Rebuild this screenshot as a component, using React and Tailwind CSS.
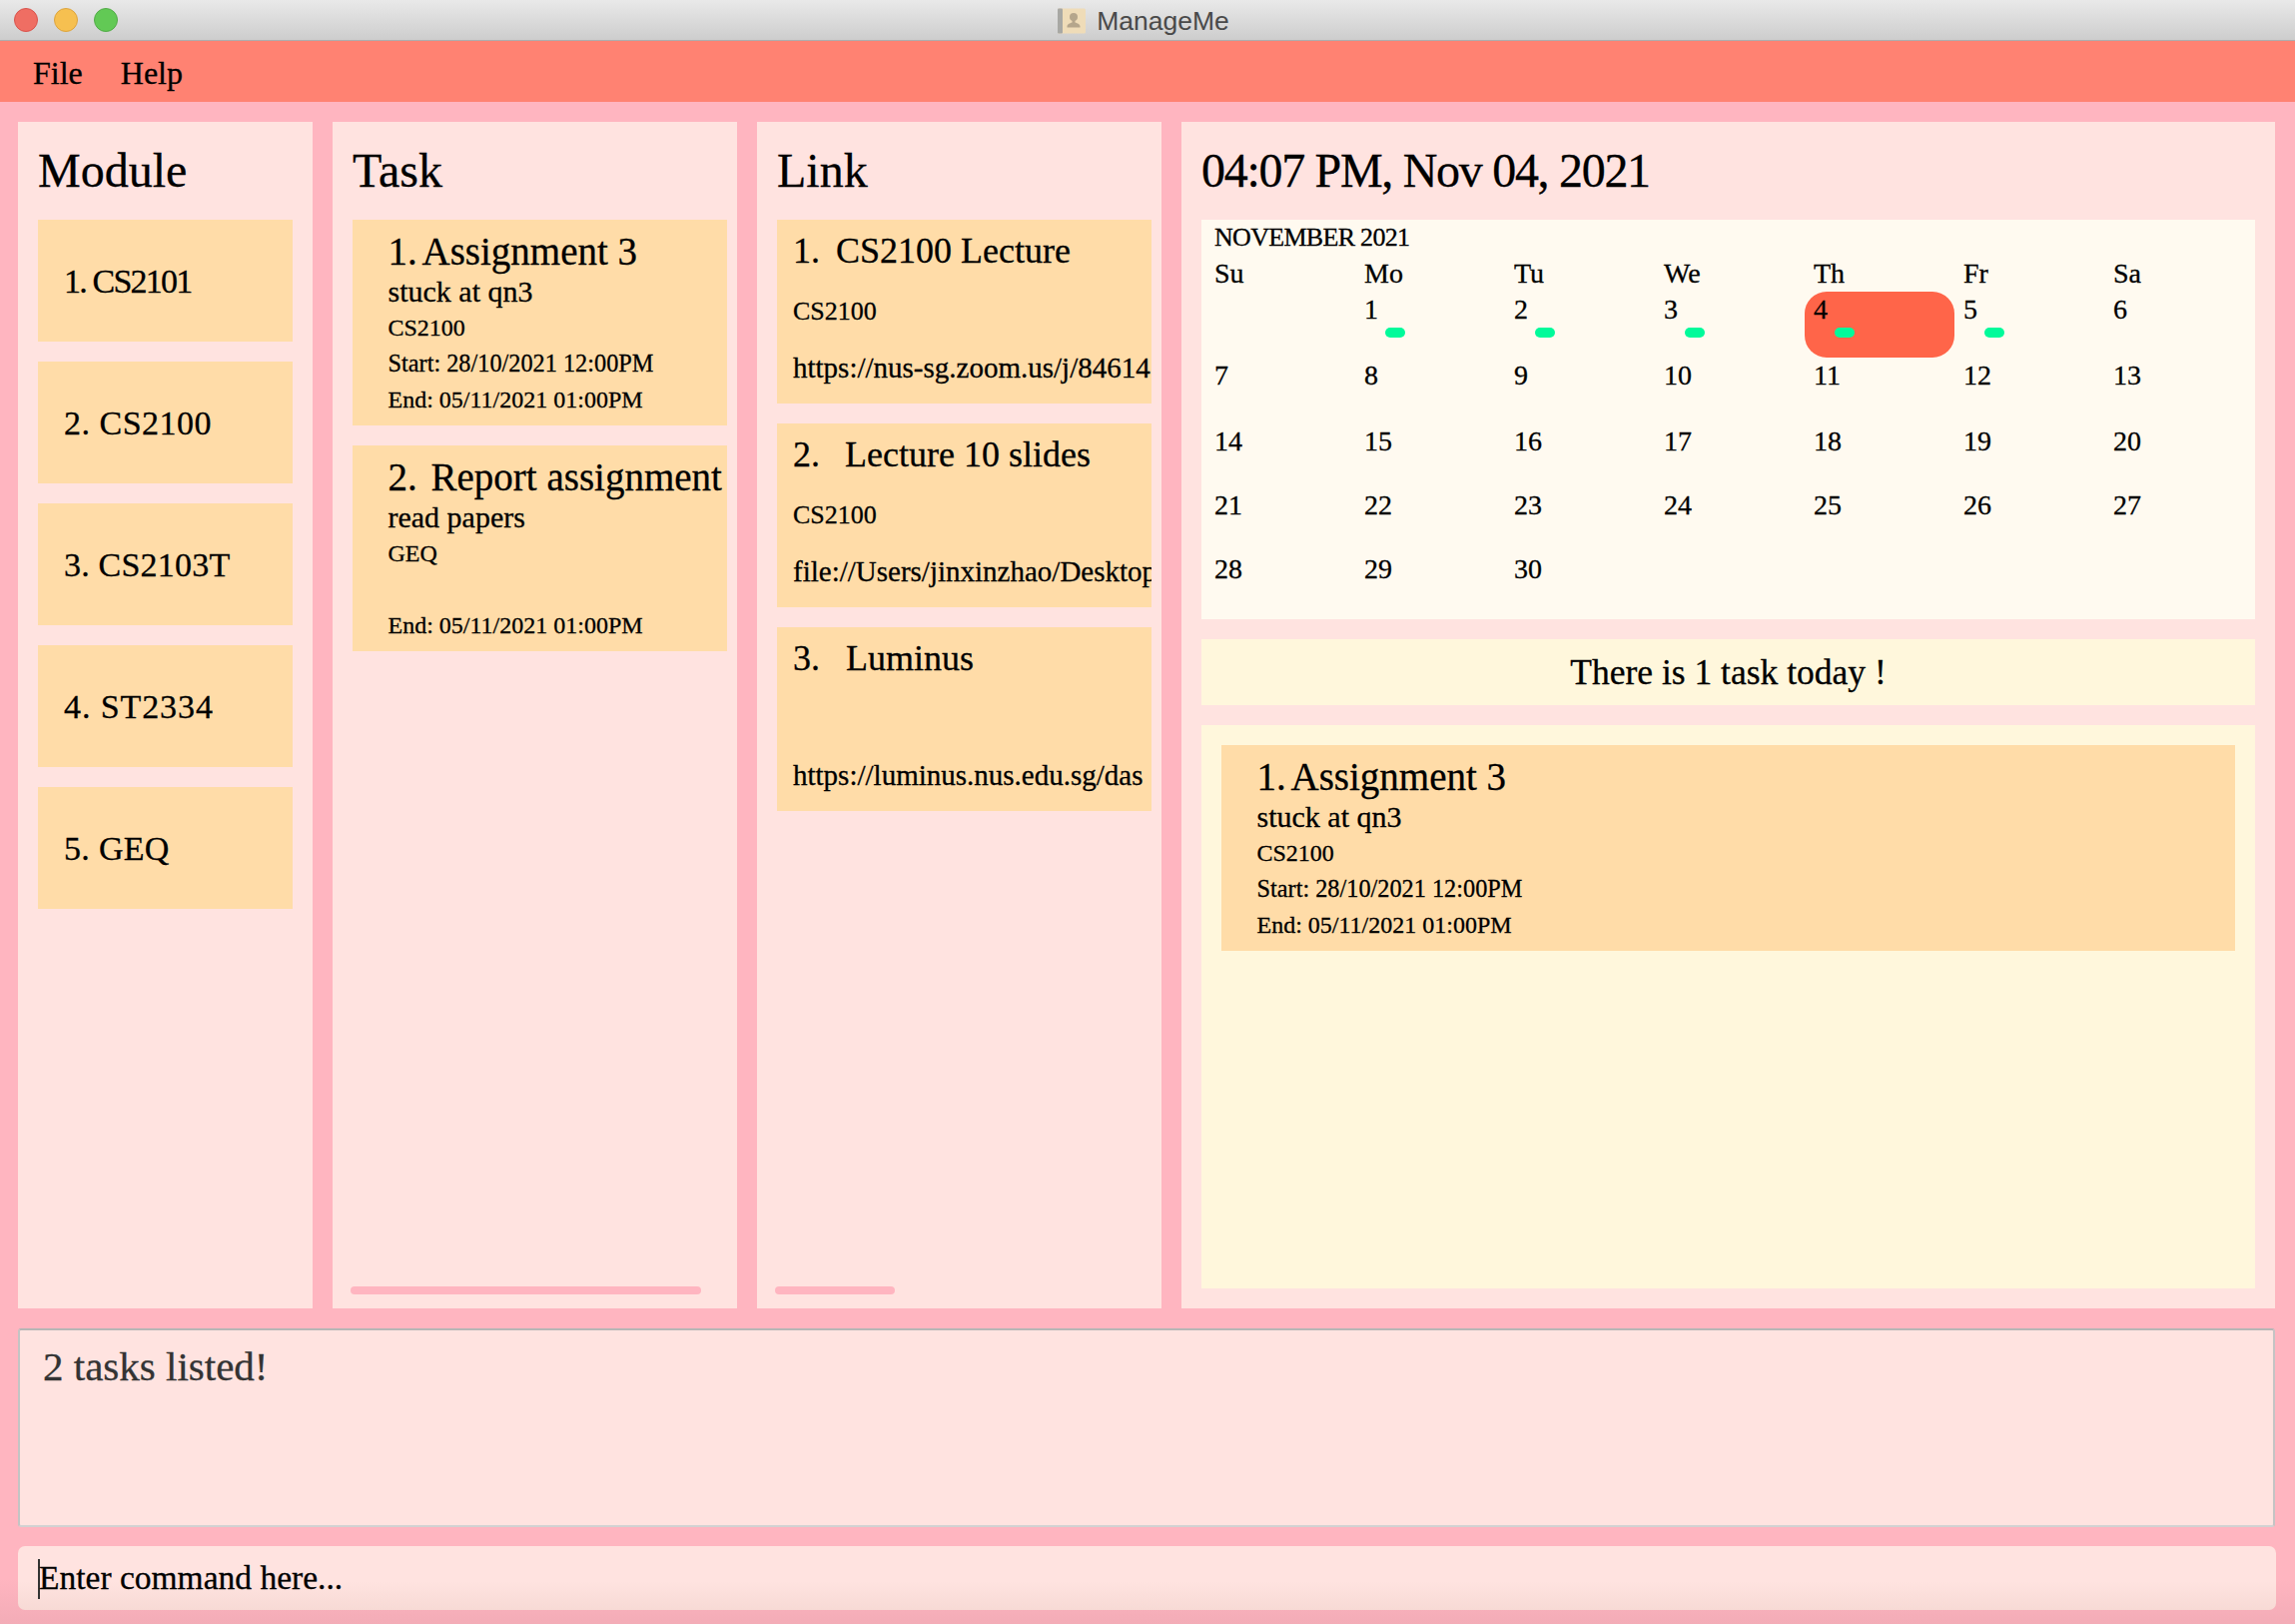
import React from "react";

const modules = [
  { label: "1. CS2101", cls: "tracking-[-1.8px]" },
  { label: "2. CS2100", cls: "tracking-[0.5px]" },
  { label: "3. CS2103T", cls: "tracking-[0.2px]" },
  { label: "4. ST2334", cls: "tracking-[0.9px]" },
  { label: "5. GEQ", cls: "tracking-[0.3px]" },
];

function TaskCard({ num, numW, title, desc, mod, start, end }) {
  return (
    <div className="flex flex-col pt-[8px] pb-[8px] pl-[35.5px] bg-[#ffdca8] text-black">
      <div className="flex h-[48px] items-center text-[39px] leading-[48px] whitespace-nowrap">
        <span className={numW}>{num}</span>
        <span>{title}</span>
      </div>
      <div className="h-[34px] text-[30px] leading-[32px]">{desc}</div>
      <div className="h-[36px] text-[24px] leading-[36px]">{mod}</div>
      <div className="h-[36px] text-[24.3px] leading-[36px] whitespace-nowrap">{start}</div>
      <div className="h-[36px] text-[24px] leading-[36px] whitespace-nowrap">{end}</div>
    </div>
  );
}

function LinkCard({ num, numW, title, mod, url }) {
  return (
    <div className="flex h-[184px] flex-col overflow-hidden bg-[#ffdca8] pl-[16px] text-black">
      <div className="flex h-[62px] items-center text-[36px] leading-[60px] whitespace-nowrap">
        <span className={numW}>{num}</span>
        <span>{title}</span>
      </div>
      <div className="h-[60px] text-[26px] leading-[60px]">{mod}</div>
      <div className="h-[52px] text-[29px] leading-[52px] whitespace-nowrap">{url}</div>
    </div>
  );
}

function Heading({ children, cls = "" }) {
  return (
    <div className={"h-[98px] pt-[25px] text-[48px] leading-[48px] text-black whitespace-nowrap " + cls}>
      {children}
    </div>
  );
}

const days = ["Su", "Mo", "Tu", "We", "Th", "Fr", "Sa"];
const weeks = [
  { h: "h-[66px]", cells: ["", "1", "2", "3", "4", "5", "6"] },
  { h: "h-[66px]", cells: ["7", "8", "9", "10", "11", "12", "13"] },
  { h: "h-[64px]", cells: ["14", "15", "16", "17", "18", "19", "20"] },
  { h: "h-[64px]", cells: ["21", "22", "23", "24", "25", "26", "27"] },
  { h: "h-[64px]", cells: ["28", "29", "30", "", "", "", ""] },
];
const dotted = new Set(["1", "2", "3", "4", "5"]);

function Calendar() {
  return (
    <div className="flex h-[400px] flex-col bg-[#fffaf0] pl-[4px] text-black">
      <div className="flex h-[36px] items-end pb-[3px] pl-[9px] text-[26px] leading-[30px] tracking-[-0.7px] whitespace-nowrap">
        NOVEMBER 2021
      </div>
      <div className="grid h-[36px] grid-cols-[repeat(7,150px)]">
        {days.map((d) => (
          <div key={d} className="pl-[9px] text-[28px] leading-[36px]">{d}</div>
        ))}
      </div>
      {weeks.map((w, i) => (
        <div key={i} className={"grid grid-cols-[repeat(7,150px)] " + w.h}>
          {w.cells.map((c, j) => (
            <div
              key={j}
              className={
                "relative pl-[9px] text-[28px] leading-[36px] " +
                (c === "4" ? "rounded-[22px] bg-[#ff6549]" : "")
              }
            >
              {c}
              {dotted.has(c) && (
                <span className="absolute left-[30px] top-[36px] h-[10px] w-[20px] rounded-[5px] bg-[#00fa9a]" />
              )}
            </div>
          ))}
        </div>
      ))}
    </div>
  );
}

function ProfileIcon() {
  return (
    <svg width="28" height="26" viewBox="0 0 28 26">
      <rect x="0" y="0.5" width="28" height="25" rx="1.5" fill="#efdcb8" />
      <rect x="0" y="0.5" width="5" height="25" rx="1" fill="#a8a8a4" />
      <circle cx="16" cy="9" r="4" fill="#b5a68c" />
      <path d="M14.5 12v2.5c-2.5 1-5 1.5-5 4v1h13v-1c0-2.5-2.5-3-5-4V12z" fill="#b5a68c" />
    </svg>
  );
}

export default function App() {
  return (
    <div className="relative flex h-[1626px] w-[2298px] flex-col overflow-hidden bg-[linear-gradient(180deg,#ffb5c0_97.2%,#f3acb7_100%)] font-['Liberation_Serif',serif] [-webkit-text-stroke:0.3px]">
      {/* title bar */}
      <div className="grid h-[41px] shrink-0 grid-cols-[1fr_auto_1fr] items-center border-b border-b-[#adadad] bg-[linear-gradient(180deg,#e9e9e9,#cdcdcd)]">
        <div className="flex items-center gap-[16px] pl-[14px]">
          <span className="h-[24px] w-[24px] rounded-full border border-[#d9534c] bg-[#ef6e63]" />
          <span className="h-[24px] w-[24px] rounded-full border border-[#dda43e] bg-[#f6c050]" />
          <span className="h-[24px] w-[24px] rounded-full border border-[#52ab48] bg-[#62c955]" />
        </div>
        <div className="flex items-center gap-[11px] pr-[8px] pt-[1px] font-['Liberation_Sans',sans-serif] text-[26.5px] leading-[32px] text-[#4a4a4a] [-webkit-text-stroke:0px]">
          <ProfileIcon />
          <span>ManageMe</span>
        </div>
        <div />
      </div>

      {/* menu */}
      <div className="flex h-[61px] shrink-0 items-center gap-[38px] bg-[#ff8272] pl-[33px] pt-[3px] text-[32px] text-black">
        <span>File</span>
        <span>Help</span>
      </div>

      {/* main */}
      <div className="mt-[20px] flex h-[1188px] shrink-0 gap-[20px] px-[18px]">
        <div className="flex w-[295px] shrink-0 flex-col bg-[#ffe3e0] px-[20px]">
          <Heading>Module</Heading>
          <div className="flex flex-col gap-[20px]">
            {modules.map((m) => (
              <div key={m.label} className={"flex h-[122px] items-center bg-[#ffdca8] pl-[26px] text-[34px] text-black " + m.cls}>
                {m.label}
              </div>
            ))}
          </div>
        </div>

        <div className="flex w-[405px] shrink-0 flex-col bg-[#ffe3e0] pl-[20px] pr-[10px]">
          <Heading>Task</Heading>
          <div className="flex flex-1 flex-col gap-[20px]">
            <TaskCard num="1." numW="w-[34px]" title="Assignment 3" desc="stuck at qn3" mod="CS2100" start="Start: 28/10/2021 12:00PM" end="End: 05/11/2021 01:00PM" />
            <TaskCard num="2." numW="w-[43px]" title="Report assignment" desc="read papers" mod="GEQ" start="" end="End: 05/11/2021 01:00PM" />
          </div>
          <div className="mb-[14px] ml-[-2px] h-[8px] w-[351px] rounded-[4px] bg-[#ffb5c0]" />
        </div>

        <div className="flex w-[405px] shrink-0 flex-col bg-[#ffe3e0] pl-[20px] pr-[10px]">
          <Heading>Link</Heading>
          <div className="flex flex-1 flex-col gap-[20px]">
            <LinkCard num="1." numW="w-[43px]" title="CS2100 Lecture" mod="CS2100" url="https://nus-sg.zoom.us/j/84614" />
            <LinkCard num="2." numW="w-[52px]" title="Lecture 10 slides" mod="CS2100" url="file://Users/jinxinzhao/Desktop" />
            <LinkCard num="3." numW="w-[53px]" title="Luminus" mod="" url="https://luminus.nus.edu.sg/das" />
          </div>
          <div className="mb-[14px] ml-[-2px] h-[8px] w-[120px] rounded-[4px] bg-[#ffb5c0]" />
        </div>

        <div className="flex w-[1095px] shrink-0 flex-col bg-[#ffe3e0] px-[20px] pb-[20px]">
          <Heading cls="tracking-[-1.3px]">04:07 PM, Nov 04, 2021</Heading>
          <Calendar />
          <div className="mt-[20px] flex h-[66px] items-center justify-center bg-[#fff7dc] pt-[2px] text-[35.5px] text-black">
            There is 1 task today !
          </div>
          <div className="mt-[20px] flex-1 bg-[#fff7dc] p-[20px]">
            <TaskCard num="1." numW="w-[34px]" title="Assignment 3" desc="stuck at qn3" mod="CS2100" start="Start: 28/10/2021 12:00PM" end="End: 05/11/2021 01:00PM" />
          </div>
        </div>
      </div>

      {/* result */}
      <div className="ml-[18px] mt-[20px] h-[199px] w-[2260px] shrink-0 rounded-[3px] border-x-2 border-t-2 border-b-2 border-x-[#c4c4c4] border-t-[#b6b6b6] border-b-[#d2d2d2] bg-[#ffe3e0] pl-[23px] pt-[11px] text-[41px] leading-[50px] text-[#333333]">
        2 tasks listed!
      </div>

      {/* command */}
      <div className="ml-[18px] mt-[19px] flex h-[64px] w-[2261px] shrink-0 items-center rounded-[7px] bg-[linear-gradient(180deg,#ffe3e0_55%,#f7dad5_100%)] pl-[20px] pt-[1px] text-[33.5px] text-black">
        <span className="mr-[-1px] h-[40px] w-[2px] bg-[#333333]" />
        <span>Enter command here...</span>
      </div>
    </div>
  );
}
